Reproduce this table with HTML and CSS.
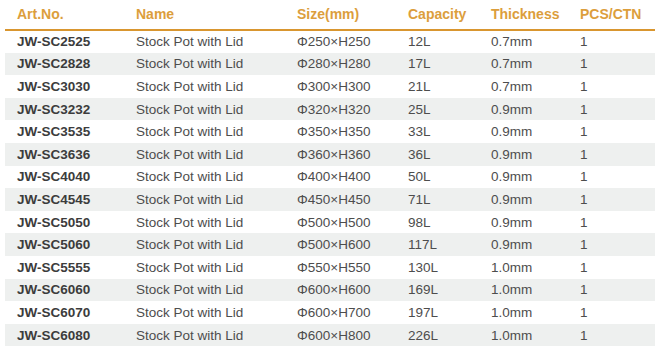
FILE: index.html
```html
<!DOCTYPE html>
<html>
<head>
<meta charset="utf-8">
<link rel="stylesheet" href="styles.css">
</head>
<body>
<table class="spec">
  <colgroup>
    <col class="c1"><col class="c2"><col class="c3"><col class="c4"><col class="c5"><col class="c6">
  </colgroup>
  <thead>
    <tr><th>Art.No.</th><th>Name</th><th>Size(mm)</th><th>Capacity</th><th>Thickness</th><th>PCS/CTN</th></tr>
  </thead>
  <tbody>
    <tr><td class="art">JW-SC2525</td><td>Stock Pot with Lid</td><td>Φ250×H250</td><td>12L</td><td>0.7mm</td><td>1</td></tr>
    <tr><td class="art">JW-SC2828</td><td>Stock Pot with Lid</td><td>Φ280×H280</td><td>17L</td><td>0.7mm</td><td>1</td></tr>
    <tr><td class="art">JW-SC3030</td><td>Stock Pot with Lid</td><td>Φ300×H300</td><td>21L</td><td>0.7mm</td><td>1</td></tr>
    <tr><td class="art">JW-SC3232</td><td>Stock Pot with Lid</td><td>Φ320×H320</td><td>25L</td><td>0.9mm</td><td>1</td></tr>
    <tr><td class="art">JW-SC3535</td><td>Stock Pot with Lid</td><td>Φ350×H350</td><td>33L</td><td>0.9mm</td><td>1</td></tr>
    <tr><td class="art">JW-SC3636</td><td>Stock Pot with Lid</td><td>Φ360×H360</td><td>36L</td><td>0.9mm</td><td>1</td></tr>
    <tr><td class="art">JW-SC4040</td><td>Stock Pot with Lid</td><td>Φ400×H400</td><td>50L</td><td>0.9mm</td><td>1</td></tr>
    <tr><td class="art">JW-SC4545</td><td>Stock Pot with Lid</td><td>Φ450×H450</td><td>71L</td><td>0.9mm</td><td>1</td></tr>
    <tr><td class="art">JW-SC5050</td><td>Stock Pot with Lid</td><td>Φ500×H500</td><td>98L</td><td>0.9mm</td><td>1</td></tr>
    <tr><td class="art">JW-SC5060</td><td>Stock Pot with Lid</td><td>Φ500×H600</td><td>117L</td><td>0.9mm</td><td>1</td></tr>
    <tr><td class="art">JW-SC5555</td><td>Stock Pot with Lid</td><td>Φ550×H550</td><td>130L</td><td>1.0mm</td><td>1</td></tr>
    <tr><td class="art">JW-SC6060</td><td>Stock Pot with Lid</td><td>Φ600×H600</td><td>169L</td><td>1.0mm</td><td>1</td></tr>
    <tr><td class="art">JW-SC6070</td><td>Stock Pot with Lid</td><td>Φ600×H700</td><td>197L</td><td>1.0mm</td><td>1</td></tr>
    <tr><td class="art">JW-SC6080</td><td>Stock Pot with Lid</td><td>Φ600×H800</td><td>226L</td><td>1.0mm</td><td>1</td></tr>
  </tbody>
</table>
</body>
</html>
```
FILE: styles.css
```css
html, body {
  margin: 0;
  padding: 0;
  background: #ffffff;
}
body {
  padding: 0 4px 0 5px;
  font-family: "Liberation Sans", Arial, sans-serif;
}
.spec {
  width: 650px;
  border-collapse: collapse;
  table-layout: fixed;
}
.c1 { width: 119px; }
.c2 { width: 161px; }
.c3 { width: 111px; }
.c4 { width: 83px; }
.c5 { width: 89px; }
.c6 { width: 87px; }
.spec th {
  height: 30px;
  padding: 0 0 2px 12px;
  text-align: left;
  font-size: 14px;
  font-weight: bold;
  color: #dc9e3c;
  border-bottom: 2px solid #d9962f;
  vertical-align: middle;
  box-sizing: border-box;
}
.spec td {
  height: 22.6px;
  padding: 0 0 0 12px;
  font-size: 13.5px;
  color: #4d4d4d;
  vertical-align: middle;
  white-space: nowrap;
  box-sizing: border-box;
}
.spec td.art {
  font-weight: bold;
  color: #3c3c3c;
}
.spec tbody tr:nth-child(even) td {
  background: #eef0ef;
}
```
